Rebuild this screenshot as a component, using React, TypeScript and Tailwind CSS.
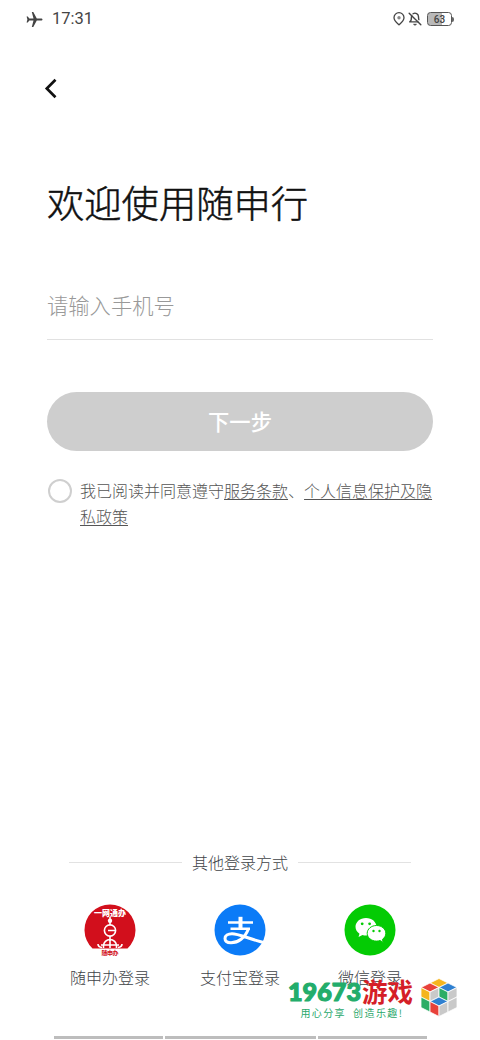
import type { ReactNode } from "react";
import { LuBellOff } from "react-icons/lu";

interface LoginMethodProps {
  label: string;
  icon: ReactNode;
}

const SuishenbanIcon = () => (
  <svg className="size-[52px]" viewBox="0 0 52 52">
    <path d="M8.500 44.500A25.500 25.500 0 1 1 43.500 44.500Z" fill="#d20f1c" />
    <text x="26" y="12" textAnchor="middle" fontSize="8" fontWeight="900" fill="#fff" textLength="32">一网通办</text>
    <g fill="none" stroke="#fff" strokeWidth="1.600">
      <path d="M26 13v8M24 26.500h7M26 32v5M14 40q0 3 4 3.500M38 40q0 3-4 3.500" />
      <circle cx="26" cy="26.500" r="5.600" />
      <path d="M19.500 44v-2a6.500 6.500 0 0 1 13 0v2M26 36v8M17 41h18" />
    </g>
    <circle cx="26" cy="16.800" r="2.200" fill="#fff" />
    <text x="26" y="50.500" textAnchor="middle" fontSize="6" fontWeight="700" fill="#d20f1c" textLength="17">随申办</text>
  </svg>
);

const AlipayIcon = () => (
  <svg className="size-[52px]" viewBox="0 0 52 52">
    <circle cx="26" cy="26" r="25.500" fill="#0b7bf7" />
    <g fill="none" stroke="#fff">
      <path d="M14 18.500h25M16.500 24.800h19.500" strokeWidth="2.500" />
      <path d="M26.500 12.800v11.500" strokeWidth="4" />
      <path d="M34.500 24.800C31 34 24 38.800 17 38.800c-4.500 0-6-2.300-6-4.300 0-2.800 3-4.700 7-4.700 7 0 15 4.500 31.500 8.700" strokeWidth="3" />
    </g>
  </svg>
);

const WechatIcon = () => (
  <svg className="size-[52px]" viewBox="0 0 52 52">
    <circle cx="26" cy="26" r="25.500" fill="#04cb04" />
    <path d="M22 14c-6 0-10.500 4-10.500 8.800 0 3 1.500 5.300 4 6.900l-1 3.300 4-2c1.100.4 2.300.6 3.500.6 6 0 10.500-4 10.500-8.800S28 14 22 14Z" fill="#fff" />
    <path d="M32.500 21.500c-5.200 0-9.300 3.500-9.300 7.800s4.100 7.800 9.300 7.800c1.200 0 2.400-.2 3.500-.6l3.300 1.900-.9-3c2.100-1.500 3.400-3.600 3.400-6.100 0-4.300-4.100-7.800-9.300-7.800Z" fill="#fff" stroke="#04cb04" />
    <g fill="#04cb04">
      <circle cx="18.200" cy="19.800" r="1.400" />
      <circle cx="25.600" cy="19.800" r="1.400" />
      <circle cx="29.500" cy="27" r="1.200" />
      <circle cx="35.500" cy="27" r="1.200" />
    </g>
  </svg>
);

// 手前上の角が欠けたキューブ
const CubeLogo = () => (
  <svg className="h-[42px] w-[40px]" viewBox="0 0 40 42" stroke="#fff" strokeWidth="0.800">
    <path d="M20 1.500l9 4.500-9 4.500L11 6Z" fill="#f5b51e" />
    <path d="M11 6l9 4.500-9 4.500L2 10.500Z" fill="#e8413a" />
    <path d="M29 6l9 4.500-9 4.500-9-4.500Z" fill="#2f80d0" />
    <path d="M2 10.500l9 4.500v9.500L2 20Z" fill="#f5b51e" />
    <path d="M11 15l9-4.500V20l-9 4.500Z" fill="#c9c9c9" />
    <path d="M20 10.500l9 4.500v9.500L20 20Z" fill="#2bad66" />
    <path d="M29 15l9-4.500V20l-9 4.500Z" fill="#c9c9c9" />
    <path d="M20 20l9 4.500-9 4.500-9-4.500Z" fill="#2f80d0" />
    <path d="M2 20l9 4.500V35l-9-4.500Z" fill="#2bad66" />
    <path d="M11 24.500L20 29v10.500L11 35Z" fill="#e8413a" />
    <path d="M20 29l9-4.500V35l-9 4.500Z" fill="#c9c9c9" />
    <path d="M29 24.500l9-4.500v10.500L29 35Z" fill="#c9c9c9" />
  </svg>
);

const LoginMethod = (props: LoginMethodProps) => {
  const { label, icon } = props;

  return (
    <button className="flex w-[130px] flex-col items-center">
      {icon}
      <span className="mt-[9px] text-[16px] leading-6 font-light text-[#404347]">{label}</span>
    </button>
  );
};

const StatusBar = () => (
  <div className="flex h-[38px] items-center justify-between px-[26px] text-[#444]">
    <div className="flex items-center gap-[9px]">
      <svg className="size-[17px]" viewBox="0 0 17 17" fill="#444">
        <path d="M16.500 8.500c0-.7-.6-1.100-1.400-1.100h-4.300L7.300 1H5.800l1.700 6.400H3.300L1.800 5.500H.6l.8 3-.8 3h1.200l1.500-1.900h4.200L5.800 16h1.500l3.500-6.400h4.300c.8 0 1.400-.4 1.400-1.100Z" />
      </svg>
      <span className="mt-px font-[Roboto,sans-serif] text-[16.500px]">17:31</span>
    </div>
    <div className="flex items-center gap-[3px]">
      <svg className="h-[14px] w-[12px]" viewBox="0 0 12 14" fill="none" stroke="#444" strokeWidth="1.300">
        <path d="M6 12.800C3.500 10.500 1 8.500 1 5.700a5 5 0 0 1 10 0c0 2.800-2.500 4.800-5 7.100Z" />
        <circle cx="6" cy="5.800" r="1.700" fill="#888" stroke="none" />
      </svg>
      <LuBellOff className="size-[14px]" strokeWidth={2.4} />
      <div className="ml-[2px] flex items-center">
        <div className="flex h-[14px] w-[25px] items-center justify-center rounded-[3.500px] border border-[#555] bg-linear-to-r from-[#b9b9b9] from-63% to-white to-63% font-[Roboto,sans-serif] text-[10px] font-medium">63</div>
        <div className="h-[5px] w-[2px] rounded-r-sm bg-[#666]" />
      </div>
    </div>
  </div>
);

const Watermark = () => (
  <div className="absolute top-[975px] left-[286px] flex">
    <div className="w-[128px]">
      <svg className="h-[34px] w-[128px]" viewBox="0 0 128 34">
        <text x="2" y="25.500" fontFamily="Lato" fontSize="25" fontWeight="900" fill="#23ad6b" stroke="#23ad6b" strokeWidth="1.200" strokeLinejoin="round" textLength="73" lengthAdjust="spacingAndGlyphs">19673</text>
        <text x="76" y="26.500" fontSize="26" fontWeight="700" fill="#d51f27" textLength="51" lengthAdjust="spacingAndGlyphs">游戏</text>
      </svg>
      <svg className="-mt-[3px] h-[16px] w-[128px]" viewBox="0 0 128 16" fill="#2aa86b">
        <text x="14.500" y="11" fontSize="10" textLength="44">用心分享</text>
        <text x="67" y="11" fontSize="10" textLength="49">创造乐趣!</text>
      </svg>
    </div>
    <div className="mt-[2px] ml-[5px]">
      <CubeLogo />
    </div>
  </div>
);

const App = () => (
  <div className="relative flex h-[1040px] w-[480px] flex-col overflow-hidden bg-white font-['Noto_Sans_CJK_SC',sans-serif]">
    <StatusBar />
    <button className="mt-[40px] ml-[44px] w-[14px]">
      <svg className="h-[21px] w-[14px]" viewBox="0 0 14 21" fill="none" stroke="#111" strokeWidth="2.700">
        <path d="M11.500 1.800L2.800 10.500l8.700 8.700" />
      </svg>
    </button>
    <main className="mt-[75px] flex flex-col px-[47px]">
      <h1 className="h-[56px] text-[37.300px] leading-[56px] font-light whitespace-nowrap text-[#111] [-webkit-text-stroke:0.5px_#111]">欢迎使用随申行</h1>
      <input
        className="mt-[42px] h-[68px] border-b border-[#e1e1e1] pb-[2px] text-[21.300px] font-light outline-none placeholder:text-[#999]"
        placeholder="请输入手机号"
      />
      <button className="mt-[52px] h-[59px] rounded-full bg-[#cecece] pb-px text-[21.300px] font-medium text-white">下一步</button>
      <div className="mt-[27px] flex">
        <span className="mt-px ml-[1px] size-[24px] shrink-0 rounded-full border-2 border-[#cfcfcf]" />
        <p className="ml-[8px] w-[356px] text-[16px] leading-[25.500px] font-light text-[#555]">
          我已阅读并同意遵守<a className="underline underline-offset-2">服务条款</a>、<a className="underline underline-offset-2">个人信息保护及隐私政策</a>
        </p>
      </div>
    </main>
    <section className="mt-[321px] flex flex-col">
      <div className="flex items-center justify-center gap-[10px] text-[16px] leading-6 font-light text-[#404347]">
        <span className="h-px w-[113px] bg-[#e2e2e2]" />
        其他登录方式
        <span className="h-px w-[113px] bg-[#e2e2e2]" />
      </div>
      <div className="mt-[30px] flex justify-center">
        <LoginMethod label="随申办登录" icon={<SuishenbanIcon />} />
        <LoginMethod label="支付宝登录" icon={<AlipayIcon />} />
        <LoginMethod label="微信登录" icon={<WechatIcon />} />
      </div>
    </section>
    <div className="mt-auto mb-[1px] ml-[54px] flex gap-[2px]">
      <span className="h-[3px] w-[109px] bg-[#bdbdbd]" />
      <span className="h-[3px] w-[151px] bg-[#bdbdbd]" />
      <span className="h-[3px] w-[109px] bg-[#bdbdbd]" />
    </div>
    <Watermark />
  </div>
);

export default App;
